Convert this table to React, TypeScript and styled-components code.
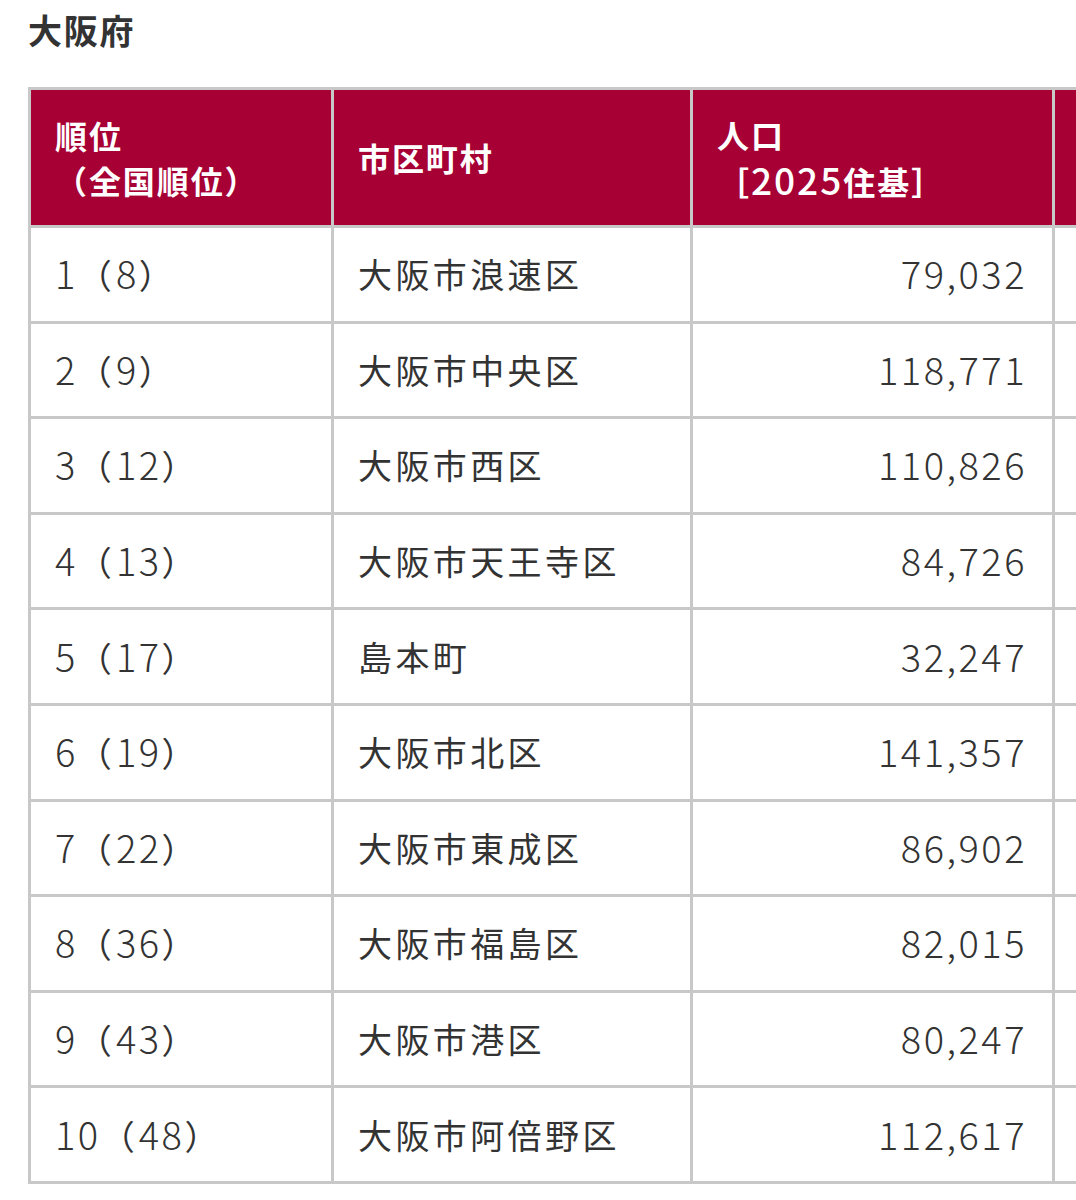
import React from "react";
import styled, { createGlobalStyle } from "styled-components";

const GlobalStyle = createGlobalStyle`
  html, body {
    margin: 0;
    padding: 0;
    background: #ffffff;
    overflow: hidden;
  }
  body {
    font-family: "Noto Sans CJK JP", "Noto Sans", sans-serif;
    color: #333333;
  }
`;

const Page = styled.div`
  padding: 5px 0 0 28px;
  width: 1400px;
`;

const Title = styled.h2`
  margin: 0 0 32px 0;
  font-size: 34px;
  line-height: 50px;
  font-weight: 700;
  letter-spacing: 0.05em;
  color: #333333;
`;

const Table = styled.table`
  border-collapse: collapse;
  table-layout: fixed;
  width: 1326px;
`;

const HeadCell = styled.th<{ $w: number }>`
  width: ${(p) => p.$w}px;
  height: 138px;
  padding: 0 0 0 24px;
  background: #a60034;
  color: #ffffff;
  border: 3px solid #c8c8c8;
  text-align: left;
  vertical-align: middle;
  font-size: 32px;
  line-height: 45px;
  font-weight: 700;
  letter-spacing: 0.06em;
  box-sizing: border-box;
  white-space: nowrap;
`;

const HeadNum = styled.span`
  font-size: 37px;
  font-weight: 500;
  letter-spacing: 2px;
`;

const Cell = styled.td<{ $align?: "left" | "right" }>`
  height: 92.6px;
  padding: 0 ${(p) => (p.$align === "right" ? "25px" : "0")} 0
    ${(p) => (p.$align === "right" ? "0" : "24px")};
  border: 3px solid #c8c8c8;
  text-align: ${(p) => p.$align ?? "left"};
  vertical-align: middle;
  font-size: 34px;
  line-height: 40px;
  font-weight: 400;
  letter-spacing: 0.1em;
  color: #333333;
  white-space: nowrap;
`;

const Num = styled.span`
  font-size: 38px;
  font-weight: 300;
  letter-spacing: 2.5px;
`;

const Paren = styled.span`
  letter-spacing: 0.12em;
`;

type Row = { rank: number; national: number; name: string; pop: string };

const rows: Row[] = [
  { rank: 1, national: 8, name: "大阪市浪速区", pop: "79,032" },
  { rank: 2, national: 9, name: "大阪市中央区", pop: "118,771" },
  { rank: 3, national: 12, name: "大阪市西区", pop: "110,826" },
  { rank: 4, national: 13, name: "大阪市天王寺区", pop: "84,726" },
  { rank: 5, national: 17, name: "島本町", pop: "32,247" },
  { rank: 6, national: 19, name: "大阪市北区", pop: "141,357" },
  { rank: 7, national: 22, name: "大阪市東成区", pop: "86,902" },
  { rank: 8, national: 36, name: "大阪市福島区", pop: "82,015" },
  { rank: 9, national: 43, name: "大阪市港区", pop: "80,247" },
  { rank: 10, national: 48, name: "大阪市阿倍野区", pop: "112,617" },
];

export default function App() {
  return (
    <>
      <GlobalStyle />
      <Page>
        <Title>大阪府</Title>
        <Table>
          <thead>
            <tr>
              <HeadCell $w={303}>
                順位
                <br />
                （全国順位）
              </HeadCell>
              <HeadCell $w={359}>市区町村</HeadCell>
              <HeadCell $w={362}>
                人口
                <br />
                ［<HeadNum>2025</HeadNum>住基］
              </HeadCell>
              <HeadCell $w={302}></HeadCell>
            </tr>
          </thead>
          <tbody>
            {rows.map((r) => (
              <tr key={r.rank}>
                <Cell>
                  <Num>{r.rank}</Num>
                  <Paren>（</Paren>
                  <Num>{r.national}</Num>）
                </Cell>
                <Cell>{r.name}</Cell>
                <Cell $align="right">
                  <Num>{r.pop}</Num>
                </Cell>
                <Cell></Cell>
              </tr>
            ))}
          </tbody>
        </Table>
      </Page>
    </>
  );
}
